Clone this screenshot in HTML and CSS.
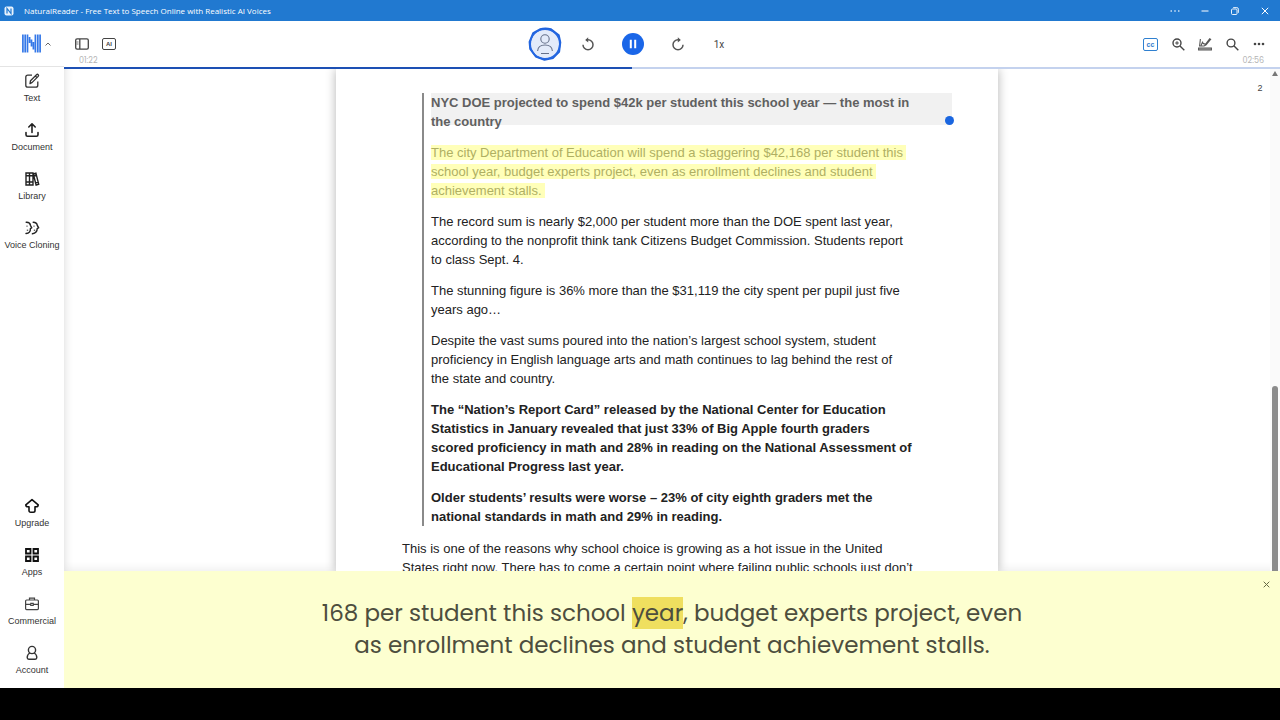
FILE: index.html
```html
<!DOCTYPE html>
<html lang="en">
<head>
    <meta charset="UTF-8">
    <meta name="viewport" content="width=device-width, initial-scale=1.0">
    <title>NaturalReader - Free Text to Speech Online with Realistic AI Voices</title>
    <link rel="stylesheet" href="styles.css">
</head>
<body>

<div class="app">
    <header class="titlebar">
        <svg class="app-icon" width="10" height="10" viewBox="0 0 10 10"><rect x="0.5" y="0.5" width="9" height="9" rx="2" fill="#e6f1fc"/><path d="M3 7.5v-5l4 5v-5" fill="none" stroke="#2179d0" stroke-width="1.2"/></svg>
        <span class="app-title">NaturalReader - Free Text to Speech Online with Realistic AI Voices</span>
        <button class="win-btn" aria-label="More"><svg width="10" height="10" viewBox="0 0 10 10" fill="#fff"><circle cx="1.2" cy="5" r="0.8"/><circle cx="5" cy="5" r="0.8"/><circle cx="8.8" cy="5" r="0.8"/></svg></button>
        <button class="win-btn" aria-label="Minimize"><svg width="8" height="8" viewBox="0 0 8 8" stroke="#fff"><path d="M0.5 4h7"/></svg></button>
        <button class="win-btn" aria-label="Restore"><svg width="8" height="8" viewBox="0 0 8 8" fill="none" stroke="#fff" stroke-width="0.9"><rect x="0.5" y="2" width="5.5" height="5.5" rx="1"/><path d="M2.2 0.6h3.6q1.6 0 1.6 1.6v3.6"/></svg></button>
        <button class="win-btn" aria-label="Close"><svg width="8" height="8" viewBox="0 0 8 8" stroke="#fff"><path d="M0.8 0.8l6.4 6.4M7.2 0.8L0.8 7.2"/></svg></button>
    </header>

    <div class="body">
        <aside class="sidebar">
            <button class="logo" aria-label="NaturalReader">
                <svg width="19" height="19" viewBox="0 0 19 19" stroke="#3478e8" stroke-width="1.7"><path d="M0.9 0.5v18M3.2 0.5v18M5.5 0.5v18M7.6 3v6M9.5 5.5v7M11.4 8v7.5M13.4 0.5v18M15.8 0.5v18M18.1 0.5v18"/></svg>
                <svg width="6" height="4" viewBox="0 0 6 4" fill="none" stroke="#666"><path d="M0.5 3.5L3 1l2.5 2.5"/></svg>
            </button>
            <nav class="menu">
                <button class="menu-item">
                    <svg width="16" height="16" viewBox="0 0 16 16" fill="none" stroke="#333" stroke-width="1.3" stroke-linejoin="round"><path d="M8 2.2H3.8Q1.8 2.2 1.8 4.2v8q0 2 2 2h8q2 0 2-2V8.5"/><path d="M6 10.6l.5-2.9 6-6q.9-.8 1.7 0 .8.9 0 1.7l-6 6zM11.3 3l1.8 1.8"/></svg>
                    <span>Text</span>
                </button>
                <button class="menu-item">
                    <svg width="16" height="16" viewBox="0 0 16 16" fill="none" stroke="#222" stroke-width="1.6" stroke-linecap="round" stroke-linejoin="round"><path d="M8 10.5V2M4.8 5L8 1.8 11.2 5M2 10.5v2.2q0 1.5 1.5 1.5h9q1.5 0 1.5-1.5v-2.2"/></svg>
                    <span>Document</span>
                </button>
                <button class="menu-item">
                    <svg width="16" height="16" viewBox="0 0 16 16" fill="none" stroke="#222" stroke-width="1.4"><path d="M2 2h3.5v12H2zM5.5 2H9v12H5.5zM2 11h7M2 4.7h7M9.3 3l2.6-.8 2.8 11-2.6.8zM9.8 5l2.6-.8M11.6 11.8l2.6-.8"/></svg>
                    <span>Library</span>
                </button>
                <button class="menu-item">
                    <svg width="16" height="16" viewBox="0 0 16 16" fill="none" stroke="#222" stroke-width="1.4" stroke-linecap="round"><path d="M2.2 2.2Q6 2 6.4 5.2l1.3 2.6-1.3.8q.2 4.6-4.4 4.9M9.2 2.2q3.7.1 4 3l1.4 2.6-1.4.8q0 4.6-4.8 5.2"/><path d="M3 6v.3M10 6v.3M3.2 10.2h.6M10.2 10.2h.6" stroke-width="1"/></svg>
                    <span>Voice Cloning</span>
                </button>
            </nav>
            <nav class="menu">
                <button class="menu-item">
                    <svg width="16" height="16" viewBox="0 0 16 16" fill="none" stroke="#111" stroke-width="1.6" stroke-linejoin="round"><path d="M8 1.6l6.2 5.2q-.2 2-2 2H11v3.7q0 1.7-1.7 1.7H6.7Q5 14.2 5 12.5V8.800H3.800q-1.800 0-2-2z"/></svg>
                    <span>Upgrade</span>
                </button>
                <button class="menu-item">
                    <svg width="16" height="16" viewBox="0 0 16 16" fill="none" stroke="#111" stroke-width="1.8"><path d="M2 2h4.500v4.500H2zM9.500 2H14v4.500H9.500zM2 9.500h4.500V14H2zM9.500 9.500H14V14H9.500z"/></svg>
                    <span>Apps</span>
                </button>
                <button class="menu-item">
                    <svg width="16" height="16" viewBox="0 0 16 16" fill="none" stroke="#444" stroke-width="1.2"><rect x="1.6" y="4" width="12.8" height="9.6" rx="1"/><path d="M5.500 4V2.200h5V4M1.600 8.300h5M9.400 8.300h5M6.800 7.300h2.400v2.200H6.800z"/></svg>
                    <span>Commercial</span>
                </button>
                <button class="menu-item">
                    <svg width="16" height="16" viewBox="0 0 16 16" fill="none" stroke="#333" stroke-width="1.4"><circle cx="8" cy="5" r="3.6"/><path d="M5.800 8Q3.200 9.500 3.200 12.500q0 1.700 1.600 1.700h6.400q1.600 0 1.600-1.700 0-3-2.600-4.500"/></svg>
                    <span>Account</span>
                </button>
            </nav>
        </aside>

        <main class="main">
            <div class="toolbar">
                <div class="tools tools-left">
                    <button class="icon-btn" aria-label="Toggle panel"><svg width="14" height="12" viewBox="0 0 14 12" fill="none" stroke="#444" stroke-width="1.3"><rect x="0.7" y="0.9" width="12.6" height="10.2" rx="1.4"/><path d="M4.800 1v10"/><path d="M1.500 4h2M1.500 6h2" stroke-width="0.7"/></svg></button>
                    <button class="icon-btn ai-btn">AI</button>
                </div>
                <div class="player">
                    <button class="avatar" aria-label="Voice">
                        <svg width="34" height="34" viewBox="0 0 34 34" fill="none"><path d="M12 2.300Q17 .8 23 2.200l7.800 6.200 1.500 7-1.200 9.500-6 6-8.600 1.800-8.700-3.200L2.200 21.800 1.600 15l3.600-8.800z" fill="#e3ebfa" stroke="#2063dc" stroke-width="2" stroke-linejoin="round"/><circle cx="17" cy="17" r="14.8" stroke="#2467e2" stroke-width="1.6"/><g stroke="#66718a" stroke-width="1.1"><circle cx="17" cy="12" r="4.2"/><path d="M9.600 24q.4-6 7.400-6t7.400 6M13 26.500h8"/></g></svg>
                    </button>
                    <button class="icon-btn" aria-label="Rewind"><svg width="14" height="14" viewBox="0 0 14 14" fill="none" stroke="#555" stroke-width="1.5"><path d="M2 7.800a5 5 0 1 0 5-5H5"/><path d="M7.200.3L4.200 2.900l3 2.600z" fill="#555" stroke="none"/></svg></button>
                    <button class="pause" aria-label="Pause"><svg width="22" height="22" viewBox="0 0 22 22"><circle cx="11" cy="11" r="11" fill="#1a66e8"/><path d="M8.800 6.800v8.400M13.200 6.800v8.400" stroke="#fff" stroke-width="2"/></svg></button>
                    <button class="icon-btn" aria-label="Forward"><svg width="14" height="14" viewBox="0 0 14 14" fill="none" stroke="#555" stroke-width="1.5"><path d="M12 7.800a5 5 0 1 1-5-5h2"/><path d="M6.800.3l3 2.600-3 2.600z" fill="#555" stroke="none"/></svg></button>
                    <button class="icon-btn speed">1x</button>
                </div>
                <div class="tools tools-right">
                    <button class="icon-btn cc-btn">cc</button>
                    <button class="icon-btn" aria-label="Zoom"><svg width="13" height="13" viewBox="0 0 13 13" fill="none" stroke="#444" stroke-width="1.4"><circle cx="5" cy="5" r="4"/><path d="M8 8l4.300 4.300"/><path d="M3.200 5h3.600M5 3.200v3.600" stroke-width="1"/></svg></button>
                    <button class="icon-btn" aria-label="Highlight"><svg width="14" height="14" viewBox="0 0 14 14" fill="none" stroke="#555" stroke-width="1.1"><path d="M2.400 2L1.600 9h4.500l2-1.200L13 1.800M3 8.500l1.500-3.200M4.500 4.500q0 2.800 3.200 2.600L12 1.400"/><path d="M.6 11h12.800v2H.6z" fill="#aaa"/></svg></button>
                    <button class="icon-btn" aria-label="Search"><svg width="13" height="13" viewBox="0 0 13 13" fill="none" stroke="#444" stroke-width="1.4"><circle cx="5" cy="5" r="3.9"/><path d="M7.800 7.800l4.500 4.500"/></svg></button>
                    <button class="icon-btn" aria-label="More options"><svg width="12" height="12" viewBox="0 0 12 12" fill="#444"><circle cx="2" cy="6" r="1.3"/><circle cx="6" cy="6" r="1.3"/><circle cx="10" cy="6" r="1.3"/></svg></button>
                </div>
                <span class="time time-now">01:22</span>
                <span class="time time-total">02:56</span>
            </div>
            <div class="progress"><div class="progress-fill" style="width: 46.7%;"></div></div>

            <div class="reader">
                <div class="viewport">
                    <article class="page">
                        <blockquote>
                            <p class="hovered"><strong>NYC DOE projected to spend $42k per student this school year — the most in<br>the country</strong><span class="marker"></span></p>
                            <p><mark>The city Department of Education will spend a staggering $42,168 per student this<br>school year, budget experts project, even as enrollment declines and student<br>achievement stalls.</mark></p>
                            <p>The record sum is nearly $2,000 per student more than the DOE spent last year,<br>according to the nonprofit think tank Citizens Budget Commission. Students report<br>to class Sept. 4.</p>
                            <p>The stunning figure is 36% more than the $31,119 the city spent per pupil just five<br>years ago…</p>
                            <p>Despite the vast sums poured into the nation’s largest school system, student<br>proficiency in English language arts and math continues to lag behind the rest of<br>the state and country.</p>
                            <p><strong>The “Nation’s Report Card” released by the National Center for Education<br>Statistics in January revealed that just 33% of Big Apple fourth graders<br>scored proficiency in math and 28% in reading on the National Assessment of<br>Educational Progress last year.</strong></p>
                            <p><strong>Older students’ results were worse – 23% of city eighth graders met the<br>national standards in math and 29% in reading.</strong></p>
                        </blockquote>
                        <p>This is one of the reasons why school choice is growing as a hot issue in the United<br>States right now. There has to come a certain point where failing public schools just don’t</p>
                    </article>
                    <span class="page-number">2</span>
                </div>
                <div class="scrollbar">
                    <svg width="6" height="5" viewBox="0 0 6 5" fill="#777"><path d="M3 0l3 5H0z"/></svg>
                    <div class="thumb"></div>
                </div>
            </div>

            <section class="caption">
                <p>168 per student this school <span class="word">year</span>, budget experts project, even<br>as enrollment declines and student achievement stalls.</p>
                <button class="caption-close" aria-label="Close captions"><svg width="7" height="7" viewBox="0 0 7 7" stroke="#666b45"><path d="M0.700 0.700l5.600 5.600M6.300 0.700L0.700 6.300"/></svg></button>
            </section>
        </main>
    </div>
</div>

</body>
</html>
```
FILE: styles.css
```css
* {
    box-sizing: border-box;
    margin: 0;
    padding: 0;
}
body {
    background: #000;
    font-family: "Liberation Sans", Arial, sans-serif;
    color: #222;
    overflow: hidden;
}
button {
    border: none;
    background: none;
    font-family: inherit;
    color: inherit;
    cursor: pointer;
}
svg {
    display: block;
    flex-shrink: 0;
}
.app {
    display: flex;
    flex-direction: column;
    height: 100vh;
    padding-bottom: 32px;
}

/* window title bar */
.titlebar {
    display: flex;
    align-items: center;
    height: 21px;
    flex-shrink: 0;
    background: #2179d0;
    color: #fff;
    padding-left: 4px;
}
.app-title {
    flex: 1;
    margin-left: 10px;
    font-family: "Open Sans", sans-serif;
    font-size: 8px;
    line-height: 12px;
}
.win-btn {
    display: flex;
    align-items: center;
    justify-content: center;
    width: 30px;
    height: 21px;
}

.body {
    display: flex;
    flex: 1;
    min-height: 0;
}

/* sidebar */
.sidebar {
    display: flex;
    flex-direction: column;
    width: 64px;
    flex-shrink: 0;
    background: #fff;
}
.logo {
    display: flex;
    align-items: center;
    gap: 4px;
    height: 46px;
    padding-left: 22px;
    border-bottom: 1px solid #e4e4e4;
}
.menu:last-child {
    margin-top: auto;
}
.menu-item {
    display: flex;
    flex-direction: column;
    align-items: center;
    gap: 3px;
    width: 100%;
    height: 49px;
    padding-top: 6px;
    font-size: 9px;
    line-height: 12px;
    color: #333;
    white-space: nowrap;
}

/* toolbar */
.main {
    display: flex;
    flex-direction: column;
    flex: 1;
    min-width: 0;
    background: #fff;
}
.toolbar {
    position: relative;
    display: grid;
    grid-template-columns: 1fr auto 1fr;
    align-items: center;
    height: 46px;
    flex-shrink: 0;
}
.tools {
    display: flex;
    align-items: center;
}
.tools-left {
    gap: 13px;
    padding-left: 11px;
}
.tools-right {
    justify-content: flex-end;
    gap: 13px;
    padding-right: 14px;
}
.icon-btn {
    display: flex;
    align-items: center;
    justify-content: center;
    min-width: 14px;
    height: 20px;
}
.ai-btn {
    height: 12px;
    border: 1px solid #444;
    border-radius: 2px;
    font-size: 6px;
    font-weight: bold;
    line-height: 10px;
    color: #444;
}
.cc-btn {
    width: 15px;
    height: 13px;
    border: 1px solid #2f80d0;
    border-radius: 2px;
    font-size: 7px;
    font-weight: bold;
    line-height: 9px;
    color: #2f80d0;
}
.player {
    display: flex;
    align-items: center;
}
.player .icon-btn {
    margin: 0 19px;
}
.player .pause {
    margin: 0 8px;
}
.player .speed {
    margin-left: 8px;
    margin-right: 90px;
    font-family: Roboto, sans-serif;
    font-size: 10px;
    color: #444;
}
.time {
    position: absolute;
    bottom: 0;
    font-family: Poppins, Inter, sans-serif;
    font-size: 8px;
    line-height: 12px;
    color: #b4b4b4;
}
.time-now {
    left: 15px;
}
.time-total {
    right: 16px;
}
.progress {
    height: 2px;
    flex-shrink: 0;
    background: #c4d2ee;
}
.progress-fill {
    height: 2px;
    background: #1d50b4;
}

/* document */
.reader {
    display: flex;
    flex: 1;
    min-height: 0;
}
.viewport {
    position: relative;
    flex: 1;
    overflow: hidden;
    box-shadow: inset 9px 0 9px -8px #ddd, inset 0 -12px 10px -10px #ededed;
}
.page {
    width: 662px;
    height: 100%;
    margin: 0 auto;
    padding: 24px 66px 0;
    background: #fff;
    box-shadow: 0 0 10px rgba(0, 0, 0, 0.3);
    font-size: 13px;
    line-height: 19px;
    white-space: nowrap;
}
blockquote {
    margin-left: 20px;
    margin-bottom: 13px;
    padding-left: 7px;
    border-left: 2px solid #8a8a8a;
}
.page p + p {
    margin-top: 12px;
}
.hovered {
    position: relative;
    width: 521px;
    background: linear-gradient(#f1f1f1, #f1f1f1) 0 0 / 100% 32px no-repeat;
    color: #606060;
}
.marker {
    position: absolute;
    right: -2px;
    bottom: 6px;
    width: 9px;
    height: 9px;
    border-radius: 50%;
    background: #1a66e0;
}
mark {
    padding-right: 3px;
    -webkit-box-decoration-break: clone;
    box-decoration-break: clone;
    background: #ffffb9;
    color: #afaf63;
}
.page-number {
    position: absolute;
    top: 11px;
    right: 2px;
    width: 16px;
    font-size: 9px;
    line-height: 16px;
    text-align: center;
    color: #444;
}
.scrollbar {
    display: flex;
    flex-direction: column;
    align-items: center;
    width: 10px;
    padding-top: 2px;
    background: #fafafa;
}
.thumb {
    width: 6px;
    height: 37%;
    margin-top: auto;
    border-radius: 3px 3px 0 0;
    background: #8b8b8b;
}

/* live captions */
.caption {
    position: relative;
    height: 117px;
    flex-shrink: 0;
    padding-top: 26px;
    background: #fdffd0;
    font-family: Poppins, Inter, sans-serif;
    font-size: 23px;
    line-height: 32px;
    text-align: center;
    color: #4d4e3e;
}
.word {
    background: #efdf5f;
}
.caption-close {
    position: absolute;
    top: 10px;
    right: 10px;
}
```
